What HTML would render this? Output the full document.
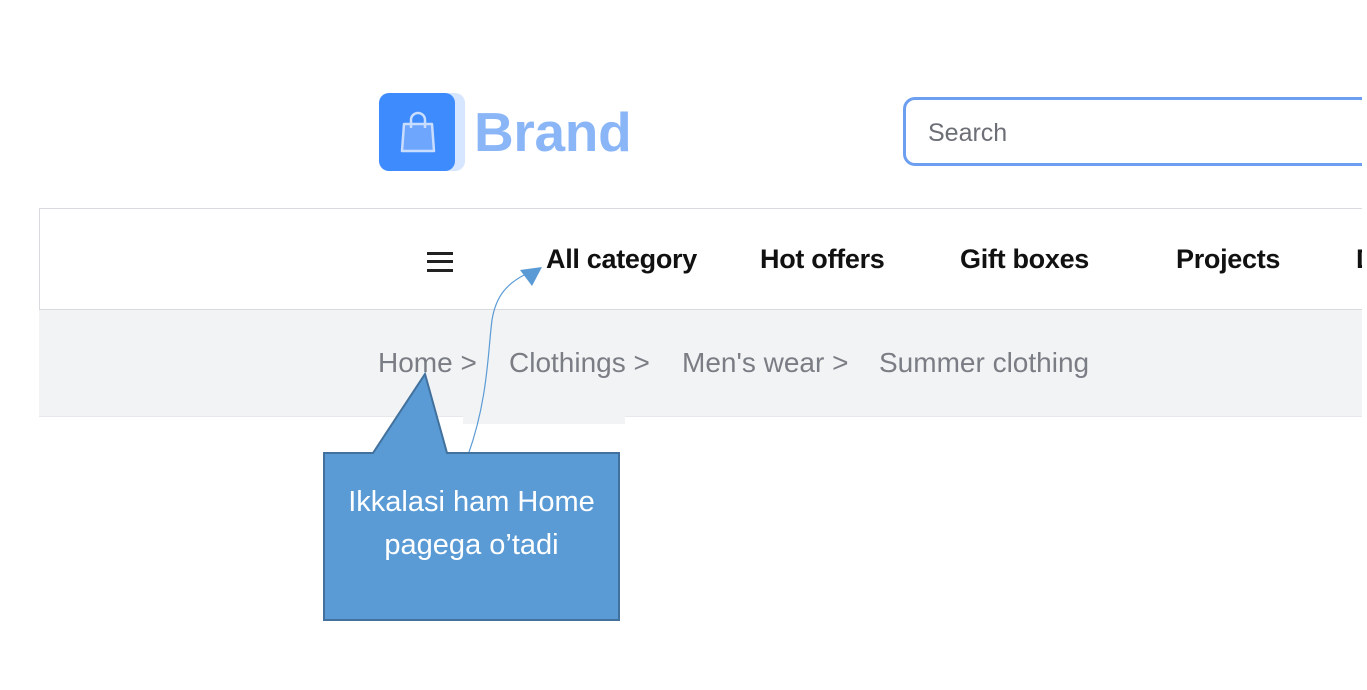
<!DOCTYPE html>
<html><head><meta charset="utf-8"><style>
body{margin:0;width:1367px;height:690px;background:#fff;position:relative;overflow:hidden;font-family:"Liberation Sans","DejaVu Sans",sans-serif}
.a{position:absolute;white-space:nowrap}
.nav{font-size:27px;color:#111;font-weight:bold;top:244px;letter-spacing:-0.3px}
.bc{font-size:28px;color:#7a7d84;top:347px}
</style></head><body>
<div class="a" style="left:387px;top:93px;width:78px;height:78px;background:#d6e6ff;border-radius:10px"></div>
<div class="a" style="left:379px;top:93px;width:76px;height:78px;background:#3d8bfd;border-radius:10px"></div>
<svg class="a" style="left:398px;top:110px" width="40" height="44" viewBox="0 0 40 44"><path d="M6 14 H34 L36 41 H4 Z" fill="#6ea6fd" stroke="#c9ddff" stroke-width="2.5" stroke-linejoin="round"/><path d="M13 18 V10 a7 7 0 0 1 14 0 V18" fill="none" stroke="#c9ddff" stroke-width="2.5"/></svg>
<div class="a" style="left:474px;top:100px;font-size:55px;font-weight:bold;color:#8ab6f7;letter-spacing:-0.3px">Brand</div>
<div class="a" style="left:903px;top:97px;width:480px;height:63px;border:3px solid #6c9ff0;border-radius:12px"></div>
<div class="a" style="left:928px;top:119px;font-size:25px;color:#6c6f76">Search</div>
<div class="a" style="left:39px;top:208px;width:1340px;height:100px;border:1px solid #d8dadd"></div>
<div class="a" style="left:39px;top:310px;width:1340px;height:106px;background:#f2f3f5;border-bottom:1px solid #e6e8ec"></div>
<div class="a" style="left:463px;top:416px;width:162px;height:8px;background:#f2f3f5"></div>
<div class="a" style="left:427px;top:252px;width:26px;height:3px;background:#222;box-shadow:0 8px 0 #222,0 17px 0 #222"></div>
<div class="a nav" style="left:546px">All category</div>
<div class="a nav" style="left:760px">Hot offers</div>
<div class="a nav" style="left:960px">Gift boxes</div>
<div class="a nav" style="left:1176px">Projects</div>
<div class="a nav" style="left:1356px">D</div>
<div class="a" style="left:1362px;top:0;width:10px;height:690px;background:#fff"></div>
<div class="a bc" style="left:378px">Home &gt;</div>
<div class="a bc" style="left:509px">Clothings &gt;</div>
<div class="a bc" style="left:682px">Men's wear &gt;</div>
<div class="a bc" style="left:879px">Summer clothing</div>
<svg class="a" style="left:0;top:0" width="1367" height="690">
<path d="M468 455 C488 400 488 350 492 320 C496 295 508 283 526 274" fill="none" stroke="#5b9bd5" stroke-width="1.2"/>
<path d="M542 267 L520 270 L532 286 Z" fill="#5b9bd5"/>
<path d="M324 453 H373 L425 374 L447 453 H619 V620 H324 Z" fill="#5b9bd5" stroke="#41719c" stroke-width="2"/>
</svg>
<div class="a" style="left:324px;top:481px;width:295px;text-align:center;color:#fff;font-size:29px;line-height:43px">Ikkalasi ham Home<br>pagega o’tadi</div>
</body></html>
